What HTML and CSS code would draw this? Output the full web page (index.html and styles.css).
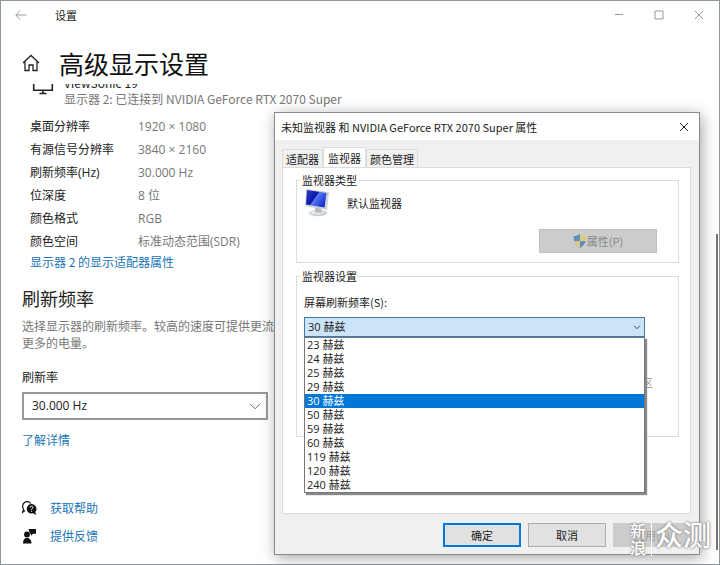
FILE: index.html
```html
<!DOCTYPE html>
<html lang="zh-CN">
<head>
<meta charset="utf-8">
<title>设置</title>
<link rel="stylesheet" href="styles.css">
</head>
<body>
<main class="window">
  <header class="titlebar">
    <button class="icon-btn" aria-label="返回"><svg width="12" height="10" viewBox="0 0 12 10"><path d="M5 .5.8 5 5 9.500M1 5h10.500" fill="none" stroke="#999"/></svg></button>
    <span class="app-name">设置</span>
    <div class="caption">
      <button class="icon-btn" aria-label="最小化"><svg width="10" height="10" viewBox="0 0 10 10"><path d="M1 4.500h8" stroke="#999"/></svg></button>
      <button class="icon-btn" aria-label="最大化"><svg width="10" height="10" viewBox="0 0 10 10"><path d="M1 1h8v8H1z" fill="none" stroke="#999"/></svg></button>
      <button class="icon-btn" aria-label="关闭"><svg width="10" height="10" viewBox="0 0 10 10"><path d="m1 1 8 8M9 1 1 9" stroke="#999"/></svg></button>
    </div>
  </header>
  <div class="page-head">
    <svg width="18" height="18" viewBox="0 0 18 18"><path d="M1 9 9 1.500 17 9M3 7.500v9h4V11h4v5.500h4v-9" fill="none" stroke="#222" stroke-width="1.300"/></svg>
    <h1>高级显示设置</h1>
  </div>
  <div class="page">
    <section class="display">
      <svg class="screen" width="22" height="11" viewBox="0 0 22 11"><path d="M1.700 0v6.200h18.600V0M11 7v3M7.500 9.500h7" fill="none" stroke="#222" stroke-width="1.600"/></svg>
      <div>
        <div class="clipped"><span>ViewSonic 19</span></div>
        <p class="muted">显示器 2: 已连接到 NVIDIA GeForce RTX 2070 Super</p>
      </div>
    </section>
    <dl class="facts">
      <dt>桌面分辨率</dt><dd>1920 × 1080</dd>
      <dt>有源信号分辨率</dt><dd>3840 × 2160</dd>
      <dt>刷新频率(Hz)</dt><dd>30.000 Hz</dd>
      <dt>位深度</dt><dd>8 位</dd>
      <dt>颜色格式</dt><dd>RGB</dd>
      <dt>颜色空间</dt><dd>标准动态范围(SDR)</dd>
    </dl>
    <a class="adapter" href="#">显示器 2 的显示适配器属性</a>
    <h2>刷新频率</h2>
    <p class="desc">选择显示器的刷新频率。较高的速度可提供更流<br>更多的电量。</p>
    <label class="rate-label" for="rate">刷新率</label>
    <div class="rate">
      <select id="rate"><option>30.000 Hz</option></select>
      <svg width="12" height="7" viewBox="0 0 12 7"><path d="m1 .8 5 5 5-5" fill="none" stroke="#666"/></svg>
    </div>
    <a class="more" href="#">了解详情</a>
    <nav class="help">
      <a href="#"><svg width="15" height="15" viewBox="0 0 15 15"><path d="M3 9.500.7 11.200 1.500 8A4.500 4.500 0 1 1 9 2.500" fill="none" stroke="#111" stroke-width="1.200"/><path d="M9.500 3a4.800 4.800 0 0 0 0 9.600 5 5 0 0 0 1.800-.4l2.700 1.800-.6-3.200A4.800 4.800 0 0 0 9.500 3z" fill="#111"/><path d="M8 6.600c0-2 3.200-1.800 3 0-.1 1-1.500 1-1.500 2.200m0 .9v1" fill="none" stroke="#fff"/></svg>获取帮助</a>
      <a href="#"><svg width="15" height="15" viewBox="0 0 15 15"><circle cx="5" cy="5.500" r="2.900" fill="#111"/><path d="M1 14.500c0-3.500 1.200-5.500 4-5.500s4.500 2 4.500 5.500zM6.500 0H14v4.800h-3L9 6.800V4.800H8z" fill="#111"/></svg>提供反馈</a>
    </nav>
  </div>
  <i class="scrollbar"></i>
</main>

<div class="dialog" role="dialog" aria-label="属性">
  <header class="dialog-title">
    <span>未知监视器 和 NVIDIA GeForce RTX 2070 Super 属性</span>
    <button class="icon-btn" aria-label="关闭"><svg width="10" height="10" viewBox="0 0 10 10"><path d="m1 1 8 8M9 1 1 9" stroke="#222"/></svg></button>
  </header>
  <div class="dialog-body">
    <div class="tabs" role="tablist">
      <button role="tab">适配器</button>
      <button role="tab" class="active" aria-selected="true">监视器</button>
      <button role="tab">颜色管理</button>
    </div>
    <div class="panel">
      <fieldset class="type">
        <legend>监视器类型</legend>
        <div class="monitor">
          <svg width="26" height="28" viewBox="0 0 26 28">
            <defs>
              <linearGradient id="glass" x1="0" y1="0" x2="1" y2=".6"><stop offset="0" stop-color="#2a3fc8"/><stop offset=".5" stop-color="#0819a8"/><stop offset=".55" stop-color="#5a7af0"/><stop offset="1" stop-color="#1230d0"/></linearGradient>
            </defs>
            <ellipse cx="14" cy="24" rx="9" ry="3.200" fill="#c9ced2"/><ellipse cx="13" cy="23.300" rx="7" ry="2" fill="#eceeef"/>
            <path d="m11 18 6 1 1 5-7-.5z" fill="#b4babf"/>
            <path d="m2 0 23 3-2 18L1 17z" fill="#cdd2d8"/>
            <path d="m3 1 19.500 3-2 14.500L2 15.500z" fill="url(#glass)"/>
          </svg>
          <span>默认监视器</span>
        </div>
        <button class="props" disabled><svg width="14" height="14" viewBox="0 0 14 14"><path d="M7 0C5 1.500 3 2 .5 2c0 5 1.500 9 6.500 12z" fill="#5e8fbe"/><path d="M7 0c2 1.500 4 2 6.500 2 0 5-1.500 9-6.500 12z" fill="#e0c987"/><path d="M7 7h5.800C12 10 10 12 7 14z" fill="#5e8fbe"/><path d="M7 7H1.200C2 10 4 12 7 14z" fill="#e0c987"/></svg>属性(P)</button>
      </fieldset>
      <fieldset class="settings">
        <legend>监视器设置</legend>
        <label for="hz">屏幕刷新频率(S):</label>
        <div class="combo">
          <select id="hz"><option>30 赫兹</option></select>
          <svg width="8" height="5" viewBox="0 0 8 5"><path d="m1 .7 3 3 3-3" fill="none" stroke="#444"/></svg>
          <ul class="list" role="listbox" aria-label="屏幕刷新频率">
            <li role="option">23 赫兹</li>
            <li role="option">24 赫兹</li>
            <li role="option">25 赫兹</li>
            <li role="option">29 赫兹</li>
            <li role="option" class="chosen" aria-selected="true">30 赫兹</li>
            <li role="option">50 赫兹</li>
            <li role="option">59 赫兹</li>
            <li role="option">60 赫兹</li>
            <li role="option">119 赫兹</li>
            <li role="option">120 赫兹</li>
            <li role="option">240 赫兹</li>
          </ul>
        </div>
        <p class="note">区</p>
      </fieldset>
    </div>
    <footer class="actions">
      <button class="default">确定</button>
      <button>取消</button>
      <button disabled>应用(A)</button>
    </footer>
  </div>
</div>
<div class="watermark"><span class="brand">新<br>浪</span><span class="word">众测</span></div>
</body>
</html>
```
FILE: styles.css
```css
* { box-sizing: border-box; }
body, h1, h2, p, dl, dd, ul, fieldset { margin: 0; padding: 0; }
body {
  position: relative;
  display: flex;
  min-height: 100vh;
  overflow: hidden;
  background: #8b979d;
  padding: 1px;
  color: #222;
  font: 12px/16px "Noto Sans CJK SC", sans-serif;
}
svg { display: block; flex: none; }
button, select { font: inherit; color: inherit; border-radius: 0; margin: 0; padding: 0; }
select { appearance: none; width: 100%; }
a { color: #1a75b8; text-decoration: none; }
.icon-btn { display: grid; place-items: center; border: 0; background: none; }
.facts, .rate, .combo { font-family: "Open Sans", "Noto Sans CJK SC", sans-serif; }

.window { position: relative; flex: 1; background: #fff; }
.titlebar { display: flex; align-items: center; height: 28px; padding-left: 14px; }
.app-name { margin-left: 28px; font-size: 11px; }
.caption { display: flex; margin-left: auto; }
.caption .icon-btn { width: 40px; height: 28px; }
.page-head { display: flex; align-items: center; gap: 19px; height: 55px; padding: 12px 0 0 21px; }
h1 { font-size: 25px; line-height: 32px; font-weight: 400; color: #111; }
.page { padding: 0 21px; }
.display { display: flex; gap: 10px; padding-left: 10px; }
.clipped { display: flex; align-items: flex-end; height: 7px; overflow: hidden; line-height: 16px; }
.muted { color: #777; }
.facts { display: grid; grid-template-columns: 108px 1fr; padding: 8px 0 0 8px; line-height: 23px; }
.facts dd { color: #777; }
.adapter { display: block; margin-left: 8px; line-height: 18px; }
h2 { margin-top: 15px; font-size: 18px; line-height: 24px; font-weight: 400; }
.desc { margin-top: 7px; line-height: 17px; color: #777; }
.rate-label { display: block; margin-top: 18px; }
.rate { position: relative; width: 246px; margin-top: 7px; }
.rate select { display: block; height: 28px; padding-left: 8px; border: 2px solid #999; background: #fff; }
.rate svg { position: absolute; right: 7px; top: 11px; }
.more { display: block; margin-top: 12px; }
.help { display: grid; gap: 12px; margin-top: 52px; }
.help a { display: flex; align-items: center; gap: 13px; }
.scrollbar { position: absolute; right: 1px; top: 233px; bottom: 14px; width: 2px; background: #777; }

.dialog {
  position: absolute;
  left: 274px;
  right: 20px;
  top: 112px;
  border: 1px solid #888;
  background: #f0f0f0;
  box-shadow: 2px 3px 14px rgba(0, 0, 0, .35);
  font-size: 11px;
  line-height: 14px;
  color: #222;
}
.dialog-title { display: flex; align-items: center; justify-content: space-between; height: 27px; padding-left: 6px; background: #fff; }
.dialog-title .icon-btn { width: 30px; height: 27px; }
.dialog-body { padding: 7px 8px 7px 7px; }
.tabs { display: flex; align-items: flex-end; }
.tabs button { height: 18px; padding: 0 3px; border: 1px solid #dcdcdc; border-bottom: 0; background: #f0f0f0; }
.tabs .active { height: 20px; padding: 0 4px; background: #fff; }
.panel { padding: 5px 11px 76px 13px; border: 1px solid #dcdcdc; background: #fff; }
fieldset { position: relative; min-width: 0; border: 1px solid #dcdcdc; }
legend { margin-left: 3px; padding: 0 2px; line-height: 14px; }
.type { height: 90px; }
.monitor { display: flex; gap: 17px; align-items: center; padding: 2px 0 0 7px; }
.props { display: flex; align-items: center; justify-content: center; width: 118px; height: 24px; margin: 12px 21px 0 auto; border: 1px solid #bfbfbf; background: #ccc; color: #888; }
.settings { margin-top: 6px; height: 168px; }
.settings label { display: block; margin: 12px 0 8px 7px; }
.combo { position: relative; margin: 0 33px 0 7px; }
.combo select { display: block; height: 20px; padding-left: 3px; border: 1px solid #3f7ba8; background: #cce4f7; }
.combo svg { position: absolute; right: 4px; top: 8px; }
.list { position: absolute; left: 0; right: 0; top: 20px; border: 1px solid #777; background: #fff; box-shadow: 2px 2px 1px #888; list-style: none; z-index: 1; }
.list li { height: 14px; padding-left: 2px; }
.list .chosen { background: #0078d7; color: #fff; }
.note { margin: 39px 25px 0 0; text-align: right; color: #999; font-size: 10px; }
.actions { display: flex; justify-content: flex-end; gap: 7px; margin-top: 9px; }
.actions button { width: 78px; height: 24px; border: 1px solid #adadad; background: #e1e1e1; }
.actions .default { border: 2px solid #0078d7; }
.actions button:disabled { border-color: #ccc; background: #ccc; color: #999; }

.watermark { position: absolute; right: 9px; bottom: 9px; display: flex; align-items: flex-start; color: #fff; text-shadow: 0 0 2px #888, 0 0 3px #999; }
.brand { padding-right: 5px; border-right: 1px solid #fff; font-size: 16px; line-height: 17px; font-weight: 500; }
.word { padding-left: 3px; font-size: 28px; line-height: 24px; font-weight: 500; }
```
